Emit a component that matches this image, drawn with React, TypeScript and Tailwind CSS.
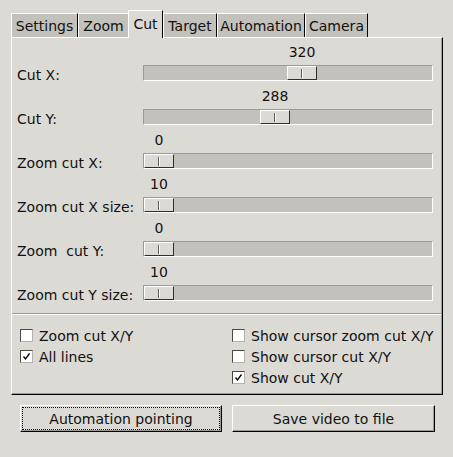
import React from "react"

const tabs = [
  { name: "Settings", w: "w-[67px]" },
  { name: "Zoom", w: "w-[50px]" },
  { name: "Cut", w: "w-[35px]" },
  { name: "Target", w: "w-[54px]" },
  { name: "Automation", w: "w-[88px]" },
  { name: "Camera", w: "w-[63px]" },
]

const sliders = [
  { label: "Cut X:", value: 320, max: 576 },
  { label: "Cut Y:", value: 288, max: 640 },
  { label: "Zoom cut X:", value: 0, max: 100 },
  { label: "Zoom cut X size:", value: 10, max: 100, min: 10 },
  { label: "Zoom  cut Y:", value: 0, max: 100 },
  { label: "Zoom cut Y size:", value: 10, max: 100, min: 10 },
]

// trough inner width 288, handle 30
const TRAVEL = 258

function Slider({ label, value, max, min = 0 }: { label: string; value: number; max: number; min?: number }) {
  const left = Math.round(((value - min) / (max - min)) * TRAVEL)
  return (
    <div className="flex h-[44px]">
      <div className="w-[126px] pt-[29px] whitespace-pre">{label}</div>
      <div className="flex w-[290px] flex-col">
        <div className="relative h-[27px]">
          <span className="absolute top-[6px] -translate-x-1/2" style={{ left: left + 16 }}>
            {value}
          </span>
        </div>
        <div className="relative h-[16px] border border-t-[#9d9a94] border-l-[#9d9a94] border-b-white border-r-white bg-[#c3c1bb]">
          <div
            className="absolute top-0 bottom-0 flex w-[30px] items-center justify-center border border-t-white border-l-white border-b-[#2e2e2e] border-r-[#2e2e2e] bg-[#dcdad5]"
            style={{ left }}
          >
            <div className="h-[9px] w-[2px] border-l border-l-[#5d5b57] border-r border-r-white" />
          </div>
        </div>
      </div>
    </div>
  )
}

function Check({ label, checked }: { label: string; checked?: boolean }) {
  return (
    <div className="flex h-[21px] items-center gap-[6px]">
      <div className="flex h-[13px] w-[13px] items-center justify-center border border-t-[#4a4843] border-l-[#4a4843] border-b-[#b5b2ab] border-r-[#b5b2ab] bg-white">
        {checked && (
          <svg width="9" height="9" viewBox="0 0 9 9">
            <path d="M1.5 4.5 L3.5 7 L7.5 1.5" fill="none" stroke="#000" strokeWidth="1.3" />
          </svg>
        )}
      </div>
      <span>{label}</span>
    </div>
  )
}

export default function App() {
  return (
    <div className="h-[457px] w-[453px] bg-[#dcdad5] pl-[11px] pt-[10px] font-['DejaVu_Sans',sans-serif] text-[14px] leading-[16px] text-[#111]">
      {/* Tabs */}
      <div className="flex h-[27px] items-end">
        {tabs.map((t, i) => {
          const selected = t.name === "Cut"
          const nextSelected = tabs[i + 1]?.name === "Cut"
          if (selected) {
            return (
              <div
                key={t.name}
                className={`${t.w} relative z-10 -mb-px flex h-[28px] justify-center border-t border-l border-r border-t-white border-l-white border-r-black bg-[#dcdad5] pt-[5px]`}
              >
                {t.name}
              </div>
            )
          }
          return (
            <div
              key={t.name}
              className={`${t.w} flex h-[24px] items-center justify-center border-t border-l border-t-white border-l-white bg-[#c3c1bb] ${nextSelected ? "" : "border-r border-r-black"}`}
            >
              {t.name}
            </div>
          )
        })}
      </div>

      {/* Pane */}
      <div className="flex h-[358px] w-[432px] flex-col border border-t-white border-l-white border-r-black border-b-black shadow-[inset_-1px_-1px_0_#9d9a94]">
        <div className="pl-[5px]">
          {sliders.map((s) => (
            <Slider key={s.label} {...s} />
          ))}
        </div>

        <div className="mt-[11px] mr-px border-t border-b border-t-[#9d9a94] border-b-white" />

        <div className="mt-[10px] grid grid-cols-[212px_1fr] pl-[8px]">
          <div>
            <Check label="Zoom cut X/Y" />
            <Check label="All lines" checked />
          </div>
          <div>
            <Check label="Show cursor zoom cut X/Y" />
            <Check label="Show cursor cut X/Y" />
            <Check label="Show cut X/Y" checked />
          </div>
        </div>
      </div>

      {/* Buttons */}
      <div className="mt-[10px] flex gap-[10px] pl-[9px]">
        <button className="relative h-[27px] w-[202px] border border-t-white border-l-white border-b-black border-r-black bg-[#dcdad5] shadow-[inset_-1px_-1px_0_#9d9a94]">
          <span className="absolute inset-[1px] border border-dotted border-black" />
          Automation pointing
        </button>
        <button className="h-[27px] w-[203px] border border-t-white border-l-white border-b-black border-r-black bg-[#dcdad5] shadow-[inset_-1px_-1px_0_#9d9a94]">
          Save video to file
        </button>
      </div>
    </div>
  )
}
